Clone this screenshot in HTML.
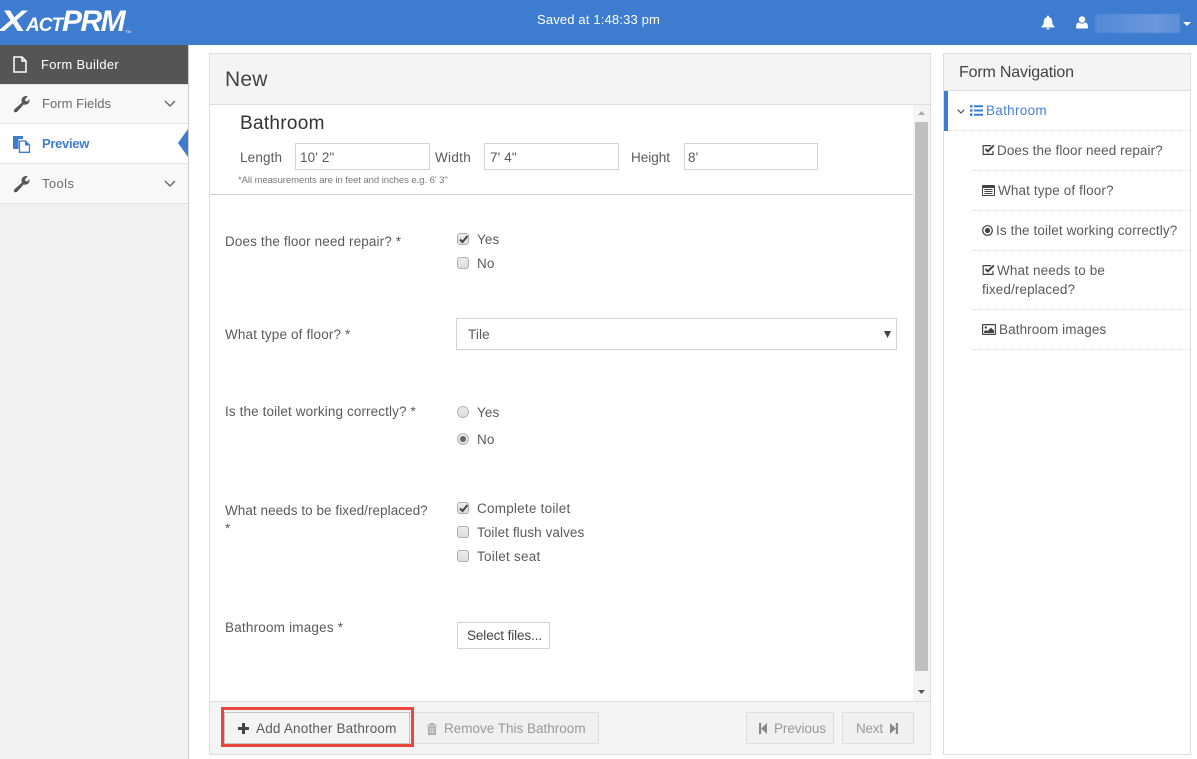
<!DOCTYPE html>
<html lang="en">
<head>
<meta charset="utf-8">
<title>XactPRM Form Builder</title>
<style>
html,body{margin:0;padding:0;width:1197px;height:759px;overflow:hidden;background:#fff}
*{box-sizing:border-box}
body{position:relative;font-family:"Liberation Sans",Arial,sans-serif;font-size:13.5px;color:#5a5a5a}
.a,.t,svg.i{position:absolute}
.t{white-space:nowrap;line-height:18px;letter-spacing:.12px}
.box{position:absolute;border:1px solid #d3d3d3;background:#fff}
.cb{position:absolute;width:12px;height:12px;border:1px solid #b0b0b0;border-radius:3px;background:linear-gradient(#ececec,#dcdcdc)}
.rd{position:absolute;width:12px;height:12px;border:1px solid #b5b5b5;border-radius:50%;background:linear-gradient(#ececec,#dcdcdc)}
.rd i{position:absolute;left:2px;top:2px;width:6px;height:6px;border-radius:50%;background:#666}
.dot{position:absolute;height:1px;border-top:1px dotted #ddd}
svg.i{fill:currentColor}
</style>
</head>
<body>
<!-- top bar -->
<div class="a" style="left:0;top:0;width:1197px;height:45px;background:#3e7cd0"></div>
<div class="t" style="left:0;top:8px;line-height:28px;color:#fff;font-weight:bold;font-style:italic;letter-spacing:0"><span style="display:inline-block;width:26px;font-size:30px;transform:scaleX(1.3);transform-origin:left">X</span><span style="display:inline-block;width:36px;font-size:19px;letter-spacing:-1px">ACT</span><span style="font-size:30px;letter-spacing:-1.500px">PRM</span></div>
<div class="t" style="left:125px;top:29px;color:#fff;font-size:4px;line-height:6px;letter-spacing:0">TM</div>
<div class="t" style="left:537px;top:11px;color:#fff;font-size:13px;letter-spacing:.16px">Saved at 1:48:33 pm</div>
<svg class="i" style="left:1041px;top:15px;color:#fff" width="14" height="15" viewBox="0 0 14 15"><path d="M7 .5c.6 0 1 .4 1 1v.6c2 .5 3.200 2.100 3.200 4.200 0 2.900.8 3.900 2.300 5.200v.9H.5v-.9C2 10.200 2.800 9.200 2.800 6.300c0-2.100 1.200-3.700 3.200-4.200v-.6c0-.6.400-1 1-1zM5.400 12.900h3.200c0 .9-.7 1.600-1.600 1.600s-1.600-.7-1.600-1.600z"/></svg>
<svg class="i" style="left:1076px;top:16px;color:#fff" width="12" height="13" viewBox="0 0 12 13"><circle cx="6" cy="3.500" r="3.200"/><path d="M1 12.500c-.6 0-1-.4-1-1 0-3 1-5 3-5 .8.700 1.800 1.100 3 1.100s2.200-.4 3-1.100c2 0 3 2 3 5 0 .6-.4 1-1 1z"/></svg>
<div class="a" style="left:1095px;top:14px;width:85px;height:19px;background:linear-gradient(90deg,#5289d6,#6b97dc 70%,#5f8fd9);filter:blur(.6px)"></div>
<svg class="i" style="left:1183px;top:22px;color:#fff" width="8" height="4" viewBox="0 0 8 4"><path d="M0 0h8L4 4z"/></svg>

<!-- sidebar -->
<div class="a" style="left:0;top:45px;width:189px;height:714px;background:#f1f1f1;border-right:1px solid #ccc"></div>
<div class="a" style="left:0;top:45px;width:188px;height:39px;background:#555"></div>
<div class="a" style="left:0;top:84px;width:188px;height:40px;background:#f8f8f8;border-top:1px solid #e2e2e2;border-bottom:1px solid #e2e2e2"></div>
<div class="a" style="left:0;top:124px;width:188px;height:40px;background:#fff;border-bottom:1px solid #e2e2e2"></div>
<div class="a" style="left:0;top:164px;width:188px;height:40px;background:#f8f8f8;border-bottom:1px solid #e2e2e2"></div>
<svg class="i" style="left:13px;top:56px;color:#fff" width="14" height="17" viewBox="0 0 14 17"><path fill="none" stroke="currentColor" stroke-width="1.500" d="M1 1h8l4 4v11H1zM9 1v4h4"/></svg>
<div class="t" style="left:41px;top:56px;color:#fff;font-size:13px;letter-spacing:.3px">Form Builder</div>
<svg class="i" style="left:13px;top:96px;color:#555" width="17" height="17" viewBox="0 0 17 17"><path d="M16.500 4.200c0 2.500-2 4.500-4.500 4.500-.5 0-1-.1-1.400-.2l-6.500 7.300c-.8.800-2 .8-2.700.1s-.7-1.900.1-2.700l7.300-6.500C8.600 5.900 8.500 5.200 8.500 4.500 8.500 2 10.500 0 13 0c.6 0 1.200.1 1.800.4L11.900 3.200l.6 1.800 1.900.5L16.200 3c.2.400.3.800.3 1.200z"/></svg>
<div class="t" style="left:42px;top:95px;font-size:13px;letter-spacing:.04px;color:#6a6a6a">Form Fields</div>
<svg class="i" style="left:164px;top:100px;color:#666" width="12" height="7" viewBox="0 0 12 7"><path fill="none" stroke="currentColor" stroke-width="1.400" d="M1 1l5 5 5-5"/></svg>
<svg class="i" style="left:12px;top:135px;color:#3e7cd0" width="19" height="18" viewBox="0 0 19 18"><path d="M1 1h10v3H6.500v10H1z"/><path fill="#fff" stroke="currentColor" stroke-width="1.300" d="M7.500 6h6l4 4v7.300H7.500z"/><path d="M13 6v4.500h4.500z"/></svg>
<div class="t" style="left:42px;top:135px;font-size:13px;font-weight:bold;letter-spacing:-.3px;color:#3e7cd0">Preview</div>
<svg class="i" style="left:178px;top:129px;color:#3e7cd0" width="10" height="28" viewBox="0 0 10 28"><path d="M10 0v28L0 14z"/></svg>
<svg class="i" style="left:13px;top:176px;color:#555" width="17" height="17" viewBox="0 0 17 17"><path d="M16.500 4.200c0 2.500-2 4.500-4.500 4.500-.5 0-1-.1-1.400-.2l-6.500 7.300c-.8.800-2 .8-2.700.1s-.7-1.900.1-2.700l7.300-6.500C8.600 5.900 8.500 5.200 8.500 4.500 8.500 2 10.500 0 13 0c.6 0 1.200.1 1.800.4L11.900 3.200l.6 1.800 1.900.5L16.200 3c.2.400.3.800.3 1.200z"/></svg>
<div class="t" style="left:42px;top:175px;font-size:13px;letter-spacing:.4px;color:#6a6a6a">Tools</div>
<svg class="i" style="left:164px;top:180px;color:#666" width="12" height="7" viewBox="0 0 12 7"><path fill="none" stroke="currentColor" stroke-width="1.400" d="M1 1l5 5 5-5"/></svg>

<!-- main panel -->
<div class="a" style="left:209px;top:53px;width:722px;height:702px;border:1px solid #ddd;background:#fff"></div>
<div class="a" style="left:210px;top:54px;width:720px;height:51px;background:#f4f4f4;border-bottom:1px solid #ddd"></div>
<div class="t" style="left:225px;top:68px;line-height:24px;font-size:21px;letter-spacing:.2px;color:#444">New</div>

<!-- scrollbar -->
<div class="a" style="left:913px;top:105px;width:17px;height:596px;background:#f4f4f4"></div>
<div class="a" style="left:915px;top:122px;width:13px;height:549px;background:#bfbfbf"></div>
<svg class="i" style="left:918px;top:111px;color:#aaa" width="7" height="4" viewBox="0 0 7 4"><path d="M0 4h7L3.500 0z"/></svg>
<svg class="i" style="left:918px;top:690px;color:#555" width="7" height="4" viewBox="0 0 7 4"><path d="M0 0h7L3.500 4z"/></svg>

<!-- section head -->
<div class="t" style="left:240px;top:112px;line-height:24px;font-size:19px;letter-spacing:.3px;color:#333">Bathroom</div>
<div class="t" style="left:240px;top:149px;letter-spacing:.15px">Length</div>
<div class="box" style="left:295px;top:143px;width:135px;height:27px"></div>
<div class="t" style="left:300px;top:149px">10' 2"</div>
<div class="t" style="left:435px;top:149px;letter-spacing:.3px">Width</div>
<div class="box" style="left:484px;top:143px;width:135px;height:27px"></div>
<div class="t" style="left:490px;top:149px">7' 4"</div>
<div class="t" style="left:631px;top:149px;letter-spacing:0">Height</div>
<div class="box" style="left:684px;top:143px;width:134px;height:27px"></div>
<div class="t" style="left:688px;top:149px">8'</div>
<div class="t" style="left:238px;top:172px;font-size:9.500px;letter-spacing:-.06px;color:#777">*All measurements are in feet and inches e.g. 6' 3"</div>
<div class="a" style="left:210px;top:194px;width:703px;height:1px;background:#ccc"></div>

<!-- questions -->
<div class="t" style="left:225px;top:233px">Does the floor need repair? *</div>
<div class="cb" style="left:457px;top:233px"></div>
<svg class="i" style="left:459px;top:235px;color:#444" width="10" height="9" viewBox="0 0 10 9"><path fill="none" stroke="currentColor" stroke-width="2" d="M1 4.500l2.500 2.500L8.500 1"/></svg>
<div class="t" style="left:477px;top:231px">Yes</div>
<div class="cb" style="left:457px;top:257px"></div>
<div class="t" style="left:477px;top:255px">No</div>

<div class="t" style="left:225px;top:326px;letter-spacing:.15px">What type of floor? *</div>
<div class="box" style="left:456px;top:318px;width:441px;height:32px"></div>
<div class="t" style="left:468px;top:326px">Tile</div>
<svg class="i" style="left:884px;top:331px;color:#444" width="7" height="7" viewBox="0 0 7 7"><path d="M0 0h7L3.500 7z"/></svg>

<div class="t" style="left:225px;top:403px">Is the toilet working correctly? *</div>
<div class="rd" style="left:457px;top:406px"></div>
<div class="t" style="left:477px;top:404px">Yes</div>
<div class="rd" style="left:457px;top:433px"><i></i></div>
<div class="t" style="left:477px;top:431px">No</div>

<div class="t" style="left:225px;top:502px;letter-spacing:.05px">What needs to be fixed/replaced?</div>
<div class="t" style="left:225px;top:520px">*</div>
<div class="cb" style="left:457px;top:502px"></div>
<svg class="i" style="left:459px;top:504px;color:#444" width="10" height="9" viewBox="0 0 10 9"><path fill="none" stroke="currentColor" stroke-width="2" d="M1 4.500l2.500 2.500L8.500 1"/></svg>
<div class="t" style="left:477px;top:500px;letter-spacing:.23px">Complete toilet</div>
<div class="cb" style="left:457px;top:526px"></div>
<div class="t" style="left:477px;top:524px;letter-spacing:.08px">Toilet flush valves</div>
<div class="cb" style="left:457px;top:550px"></div>
<div class="t" style="left:477px;top:548px;letter-spacing:.25px">Toilet seat</div>

<div class="t" style="left:225px;top:619px;letter-spacing:.2px">Bathroom images *</div>
<div class="box" style="left:457px;top:622px;width:93px;height:27px"></div>
<div class="t" style="left:467px;top:627px;color:#444;letter-spacing:-.1px">Select files...</div>

<!-- footer -->
<div class="a" style="left:210px;top:701px;width:720px;height:53px;background:#f4f4f4;border-top:1px solid #ddd"></div>
<div class="a" style="left:405px;top:712px;width:194px;height:32px;background:#f0f0f0;border:1px solid #ddd"></div>
<svg class="i" style="left:427px;top:723px;color:#aaa" width="10" height="12" viewBox="0 0 10 12"><path d="M3.500 0h3l.6 1.500H10v1H0v-1h2.900zM1 3.300h8V12H1zM2.800 4.500v6h.8v-6zm2 0v6h.8v-6zm2 0v6h.6v-6z" fill-rule="evenodd"/></svg>
<div class="t" style="left:444px;top:720px;color:#999;letter-spacing:0">Remove This Bathroom</div>
<div class="a" style="left:224px;top:712px;width:186px;height:32px;background:#f4f4f4;border:1px solid #c6c6c6"></div>
<div class="a" style="left:221px;top:707px;width:193px;height:40px;border:3px solid #e8463f"></div>
<svg class="i" style="left:238px;top:723px;color:#444" width="11" height="11" viewBox="0 0 11 11"><path d="M4 0h3v4h4v3H7v4H4V7H0V4h4z"/></svg>
<div class="t" style="left:256px;top:720px;letter-spacing:.2px">Add Another Bathroom</div>
<div class="a" style="left:746px;top:712px;width:88px;height:32px;background:#f0f0f0;border:1px solid #ddd"></div>
<svg class="i" style="left:759px;top:723px;color:#888" width="8" height="11" viewBox="0 0 8 11"><path d="M0 0h2.200v11H0zM2.200 5.500L8 0v11z"/></svg>
<div class="t" style="left:774px;top:720px;color:#999;letter-spacing:-.07px">Previous</div>
<div class="a" style="left:842px;top:712px;width:72px;height:32px;background:#f0f0f0;border:1px solid #ddd"></div>
<div class="t" style="left:856px;top:720px;color:#999;letter-spacing:-.2px">Next</div>
<svg class="i" style="left:890px;top:723px;color:#888" width="8" height="11" viewBox="0 0 8 11"><path d="M5.800 0H8v11H5.800zM5.800 5.500L0 0v11z"/></svg>

<!-- form navigation -->
<div class="a" style="left:943px;top:53px;width:248px;height:702px;border:1px solid #ddd;background:#fff"></div>
<div class="a" style="left:944px;top:54px;width:246px;height:37px;background:#f4f4f4;border-bottom:1px solid #ddd"></div>
<div class="t" style="left:959px;top:64px;font-size:16px;letter-spacing:-.17px;color:#444">Form Navigation</div>
<div class="a" style="left:944px;top:91px;width:4px;height:40px;background:#3e7cd0"></div>
<svg class="i" style="left:957px;top:109px;color:#555" width="8" height="5" viewBox="0 0 8 5"><path fill="none" stroke="currentColor" stroke-width="1.200" d="M.7.700L4 4 7.300.700"/></svg>
<svg class="i" style="left:970px;top:105px;color:#3e7cd0" width="13" height="11" viewBox="0 0 13 11"><path d="M0 0h2.500v2.500H0zM4 .3h9v2H4zM0 4.200h2.500v2.500H0zM4 4.500h9v2H4zM0 8.400h2.500v2.500H0zM4 8.700h9v2H4z"/></svg>
<div class="t" style="left:986px;top:102px;color:#4a80d4;letter-spacing:.3px">Bathroom</div>
<div class="dot" style="left:948px;top:130px;width:242px"></div>

<svg class="i" style="left:982px;top:144px;color:#444" width="13" height="12" viewBox="0 0 13 12"><path fill="none" stroke="currentColor" stroke-width="1.200" d="M11 7v3.400H1.200V1.600H9"/><path fill="none" stroke="currentColor" stroke-width="2" d="M3.500 5l2.300 2.300L11.800 1.500"/></svg>
<div class="t" style="left:997px;top:142px;letter-spacing:.08px">Does the floor need repair?</div>
<div class="dot" style="left:972px;top:170px;width:218px"></div>

<svg class="i" style="left:982px;top:185px;color:#444" width="13" height="11" viewBox="0 0 13 11"><path fill-rule="evenodd" d="M1 0h11a1 1 0 0 1 1 1v9a1 1 0 0 1-1 1H1a1 1 0 0 1-1-1V1a1 1 0 0 1 1-1zM1 3v7h11V3zM2.500 4h8v1h-8zm0 2h8v1h-8zm0 2h8v1h-8z"/></svg>
<div class="t" style="left:998px;top:182px">What type of floor?</div>
<div class="dot" style="left:972px;top:210px;width:218px"></div>

<svg class="i" style="left:982px;top:225px;color:#444" width="11" height="11" viewBox="0 0 11 11"><circle cx="5.500" cy="5.500" r="4.800" fill="none" stroke="currentColor" stroke-width="1.200"/><circle cx="5.500" cy="5.500" r="2.600"/></svg>
<div class="t" style="left:996px;top:222px;letter-spacing:.11px">Is the toilet working correctly?</div>
<div class="dot" style="left:972px;top:250px;width:218px"></div>

<svg class="i" style="left:982px;top:264px;color:#444" width="13" height="12" viewBox="0 0 13 12"><path fill="none" stroke="currentColor" stroke-width="1.200" d="M11 7v3.400H1.200V1.600H9"/><path fill="none" stroke="currentColor" stroke-width="2" d="M3.500 5l2.300 2.300L11.800 1.500"/></svg>
<div class="t" style="left:997px;top:262px;letter-spacing:.14px">What needs to be</div>
<div class="t" style="left:982px;top:281px;letter-spacing:.1px">fixed/replaced?</div>
<div class="dot" style="left:972px;top:309px;width:218px"></div>

<svg class="i" style="left:982px;top:324px;color:#444" width="14" height="11" viewBox="0 0 14 11"><path fill-rule="evenodd" d="M1 0h12a1 1 0 0 1 1 1v9a1 1 0 0 1-1 1H1a1 1 0 0 1-1-1V1a1 1 0 0 1 1-1zM1.200 1.200v8.600h11.600V1.200z"/><circle cx="3.800" cy="3.500" r="1.200"/><path d="M2 9V7.500L4 6l1.500 1L9 3.500l3 3V9z"/></svg>
<div class="t" style="left:999px;top:321px;letter-spacing:.1px">Bathroom images</div>
<div class="dot" style="left:972px;top:349px;width:218px"></div>
</body>
</html>
